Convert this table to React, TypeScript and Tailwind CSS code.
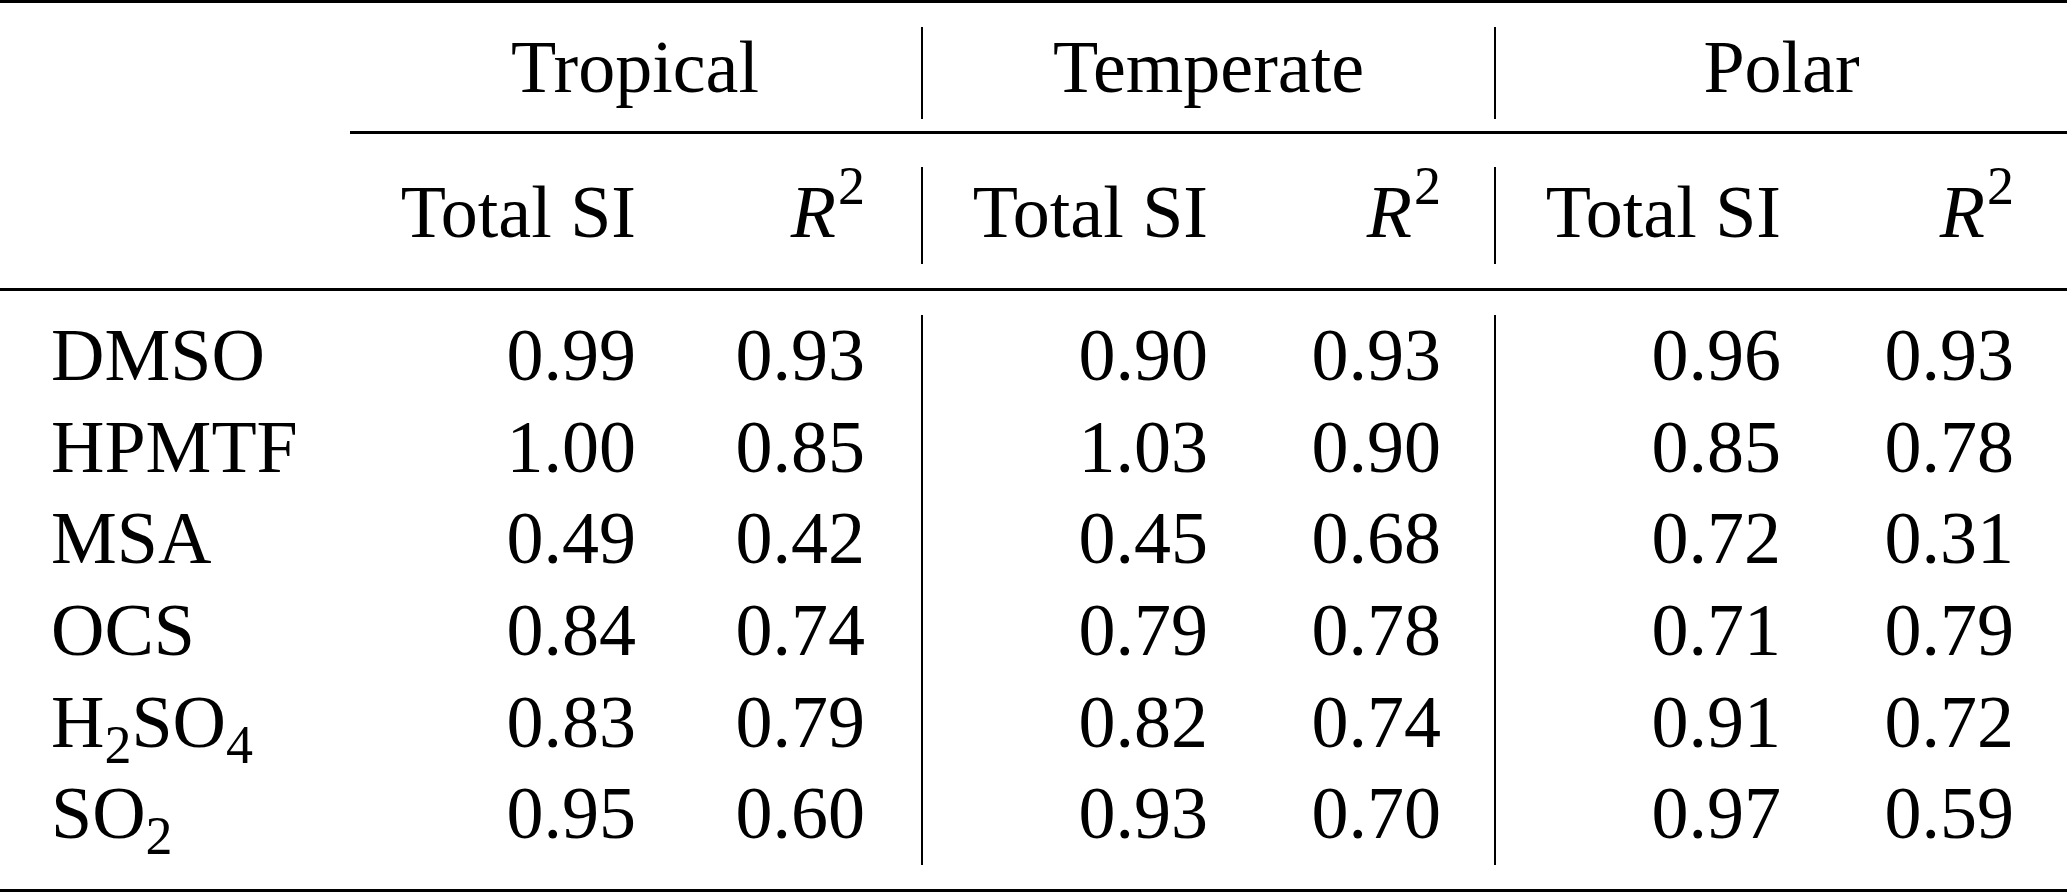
import React from "react"

type Row = { label: React.ReactNode; values: string[] }

const Sub = ({ children }: { children: React.ReactNode }) => (
  <span className="align-[-16px] text-[54px] leading-[0]">{children}</span>
)

const rows: Row[] = [
  { label: "DMSO", values: ["0.99", "0.93", "0.90", "0.93", "0.96", "0.93"] },
  { label: "HPMTF", values: ["1.00", "0.85", "1.03", "0.90", "0.85", "0.78"] },
  { label: "MSA", values: ["0.49", "0.42", "0.45", "0.68", "0.72", "0.31"] },
  { label: "OCS", values: ["0.84", "0.74", "0.79", "0.78", "0.71", "0.79"] },
  {
    label: (
      <>
        H<Sub>2</Sub>SO<Sub>4</Sub>
      </>
    ),
    values: ["0.83", "0.79", "0.82", "0.74", "0.91", "0.72"],
  },
  {
    label: (
      <>
        SO<Sub>2</Sub>
      </>
    ),
    values: ["0.95", "0.60", "0.93", "0.70", "0.97", "0.59"],
  },
]

const regions = ["Tropical", "Temperate", "Polar"]

// column widths match the LaTeX tabular (l r r | r r | r r)
const grid = "grid grid-cols-[349px_339px_233px_339px_234px_339px_234px]"

// per-column cell classes, index 0..6
const cellCls = [
  "pl-[51px] text-left",
  "pr-[52px] text-right",
  "pr-[56px] text-right",
  "pr-[52px] text-right border-l-2 border-black",
  "pr-[53px] text-right",
  "pr-[52px] text-right border-l-2 border-black",
  "pr-[53px] text-right",
]

function R2() {
  return (
    <span className="whitespace-nowrap">
      <i>R</i>
      <span className="ml-[2px] align-[33px] text-[54px] leading-[0]">2</span>
    </span>
  )
}

export default function App() {
  return (
    <div className="w-[2067px] h-[893px] bg-white text-black font-['Liberation_Serif',serif] text-[74px] overflow-hidden">
      {/* top rule */}
      <div className="h-[3px] bg-black" />

      {/* region headers */}
      <div className={`${grid} mt-[24px] h-[92px] leading-[80px]`}>
        <div />
        {regions.map((r, i) => (
          <div
            key={r}
            className={`col-span-2 text-center ${i > 0 ? "border-l-2 border-black" : ""}`}
          >
            {r}
          </div>
        ))}
      </div>

      {/* cmidrule */}
      <div className="mt-[12px] ml-[350px] h-[3px] bg-black" />

      {/* sub headers */}
      <div className={`${grid} mt-[33px] h-[97px] leading-[90px]`}>
        <div className={cellCls[0]} />
        {[0, 1, 2].map((g) => (
          <React.Fragment key={g}>
            <div className={cellCls[1 + g * 2]}>Total SI</div>
            <div className={cellCls[2 + g * 2]}>
              <R2 />
            </div>
          </React.Fragment>
        ))}
      </div>

      {/* midrule */}
      <div className="mt-[24px] h-[3px] bg-black" />

      {/* body */}
      <div className={`${grid} mt-[24px] auto-rows-[91.67px] leading-[80px]`}>
        {rows.map((row, ri) => (
          <React.Fragment key={ri}>
            <div className={`${cellCls[0]} whitespace-nowrap`}>{row.label}</div>
            {row.values.map((v, vi) => (
              <div key={vi} className={cellCls[vi + 1]}>
                {v}
              </div>
            ))}
          </React.Fragment>
        ))}
      </div>

      {/* bottom rule */}
      <div className="mt-[24px] h-[3px] bg-black" />
    </div>
  )
}
